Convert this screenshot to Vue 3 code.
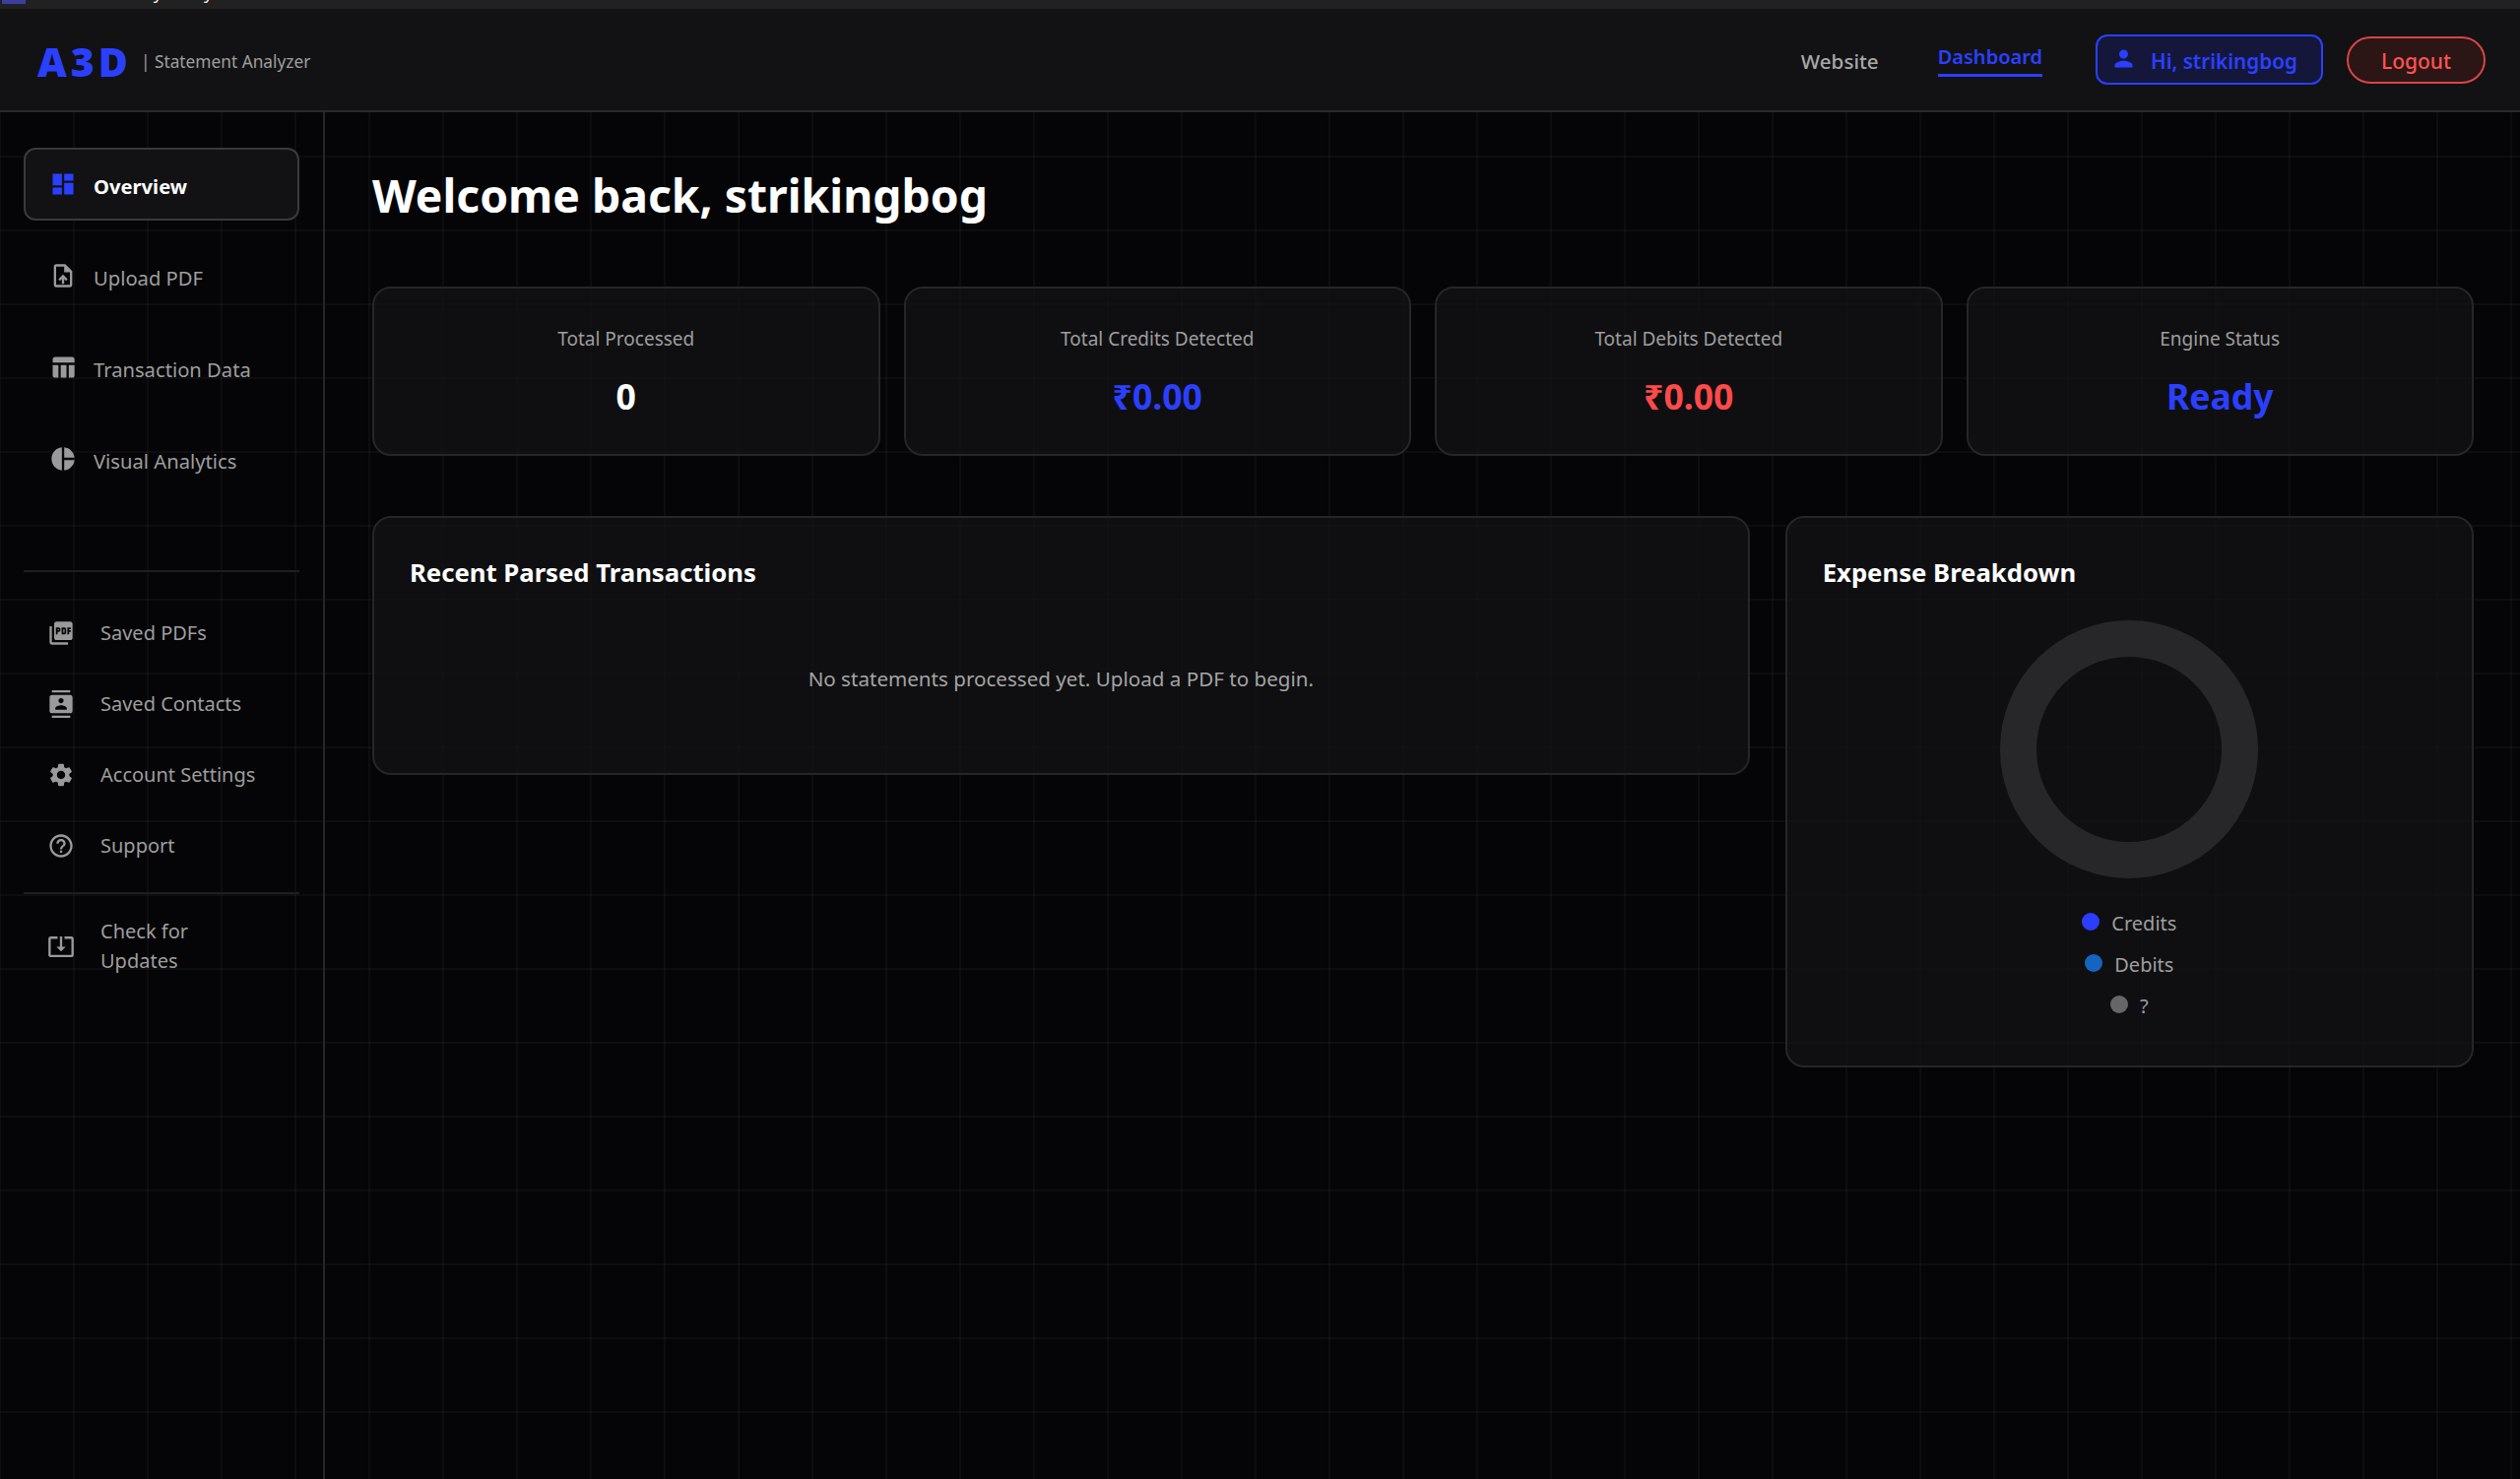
<template>
  <div class="page">
    <div class="topstrip">
      <span class="strip-icon"></span>
      <span class="strip-title">my Analysis</span>
    </div>

    <header class="header">
      <div class="brand">
        <span class="logo">A3D</span>
        <span class="tagline">| Statement Analyzer</span>
      </div>
      <nav class="topnav">
        <a class="toplink">Website</a>
        <a class="toplink active">Dashboard</a>
        <div class="user-box">
          <svg viewBox="0 0 24 24" class="user-icon"><path :d="icons.person" /></svg>
          <span>Hi, strikingbog</span>
        </div>
        <button class="logout">Logout</button>
      </nav>
    </header>

    <div class="body">
      <aside class="sidebar">
        <div class="primary">
          <div v-for="item in primaryNav" :key="item.label" class="nav-item" :class="{ current: item.current }">
            <svg viewBox="0 0 24 24" class="nav-icon"><path :d="item.icon" /></svg>
            <span>{{ item.label }}</span>
          </div>
        </div>
        <div class="divider first"></div>
        <div class="secondary">
          <div v-for="item in secondaryNav" :key="item.label" class="sub-item">
            <svg viewBox="0 0 24 24" class="sub-icon"><path :d="item.icon" /></svg>
            <span>{{ item.label }}</span>
          </div>
        </div>
        <div class="divider"></div>
        <div class="sub-item update">
          <svg viewBox="0 0 24 24" class="sub-icon"><path :d="icons.update" /></svg>
          <span>Check for<br />Updates</span>
        </div>
      </aside>

      <main class="main">
        <h1 class="welcome">Welcome back, strikingbog</h1>

        <section class="stats">
          <div v-for="stat in stats" :key="stat.label" class="card stat">
            <div class="stat-label">{{ stat.label }}</div>
            <div class="stat-value" :class="stat.tone">{{ stat.value }}</div>
          </div>
        </section>

        <section class="panels">
          <div class="card panel recent">
            <h2 class="panel-title">Recent Parsed Transactions</h2>
            <p class="empty">No statements processed yet. Upload a PDF to begin.</p>
          </div>
          <div class="card panel breakdown">
            <h2 class="panel-title">Expense Breakdown</h2>
            <div class="donut"></div>
            <ul class="legend">
              <li v-for="entry in legend" :key="entry.label">
                <i class="dot" :style="{ background: entry.color }"></i>
                <span>{{ entry.label }}</span>
              </li>
            </ul>
          </div>
        </section>
      </main>
    </div>
  </div>
</template>

<script setup>
const icons = {
  dashboard: 'M3 13h8V3H3v10zm0 8h8v-6H3v6zm10 0h8V11h-8v10zm0-18v6h8V3h-8z',
  upload: 'M14 2H6c-1.1 0-1.99.9-1.99 2L4 20c0 1.1.89 2 1.99 2H18c1.1 0 2-.9 2-2V8l-6-6zm4 18H6V4h7v5h5v11zM8 15.01l1.41 1.41L11 14.84V19h2v-4.16l1.59 1.59L16 15.01 12.01 11 8 15.01z',
  table: 'M10 10.02h5V21h-5zM17 21h3c1.1 0 2-.9 2-2v-9h-5v11zm3-18H5c-1.1 0-2 .9-2 2v3h19V5c0-1.1-.9-2-2-2zM3 19c0 1.1.9 2 2 2h3V10H3v9z',
  pie: 'M11 2v20c-5.07-.5-9-4.79-9-10s3.93-9.5 9-10zm2.03 0v8.99H22c-.47-4.74-4.24-8.52-8.97-8.99zm0 11.01V22c4.74-.47 8.5-4.25 8.97-8.99h-8.97z',
  pdf: 'M20 2H8c-1.1 0-2 .9-2 2v12c0 1.1.9 2 2 2h12c1.1 0 2-.9 2-2V4c0-1.1-.9-2-2-2zm-8.5 7.5c0 .83-.67 1.5-1.5 1.5H9v2H7.5V7H10c.83 0 1.5.67 1.5 1.5v1zm5 2c0 .83-.67 1.5-1.5 1.5h-2.5V7H15c.83 0 1.5.67 1.5 1.5v3zm4-3H19v1h1.5V11H19v2h-1.5V7h3v1.5zM9 9.5h1v-1H9v1zM4 6H2v14c0 1.1.9 2 2 2h14v-2H4V6zm10 5.5h1v-3h-1v3z',
  contacts: 'M20 0H4v2h16V0zM4 24h16v-2H4v2zM20 4H4c-1.1 0-2 .9-2 2v12c0 1.1.9 2 2 2h16c1.1 0 2-.9 2-2V6c0-1.1-.9-2-2-2zm-8 2.75c1.24 0 2.25 1.01 2.25 2.25s-1.01 2.25-2.25 2.25S9.75 10.24 9.75 9 10.76 6.75 12 6.75zM17 17H7v-1.5c0-1.67 3.33-2.5 5-2.5s5 .83 5 2.5V17z',
  settings: 'M19.14 12.94c.04-.3.06-.61.06-.94 0-.32-.02-.64-.07-.94l2.03-1.58c.18-.14.23-.41.12-.61l-1.92-3.32c-.12-.22-.37-.29-.59-.22l-2.39.96c-.5-.38-1.03-.7-1.62-.94l-.36-2.54c-.04-.24-.24-.41-.48-.41h-3.84c-.24 0-.43.17-.47.41l-.36 2.54c-.59.24-1.13.57-1.62.94l-2.39-.96c-.22-.08-.47 0-.59.22L2.74 8.87c-.12.21-.08.47.12.61l2.03 1.58c-.05.3-.09.63-.09.94s.02.64.07.94l-2.03 1.58c-.18.14-.23.41-.12.61l1.92 3.32c.12.22.37.29.59.22l2.39-.96c.5.38 1.03.7 1.62.94l.36 2.54c.05.24.24.41.48.41h3.84c.24 0 .44-.17.47-.41l.36-2.54c.59-.24 1.13-.56 1.62-.94l2.39.96c.22.08.47 0 .59-.22l1.92-3.32c.12-.22.07-.47-.12-.61l-2.01-1.58zM12 15.6c-1.98 0-3.6-1.62-3.6-3.6s1.62-3.6 3.6-3.6 3.6 1.62 3.6 3.6-1.62 3.6-3.6 3.6z',
  help: 'M11 18h2v-2h-2v2zm1-16C6.48 2 2 6.48 2 12s4.48 10 10 10 10-4.48 10-10S17.52 2 12 2zm0 18c-4.41 0-8-3.59-8-8s3.59-8 8-8 8 3.59 8 8-3.59 8-8 8zm0-14c-2.21 0-4 1.79-4 4h2c0-1.1.9-2 2-2s2 .9 2 2c0 2-3 1.75-3 5h2c0-2.25 3-2.5 3-5 0-2.21-1.79-4-4-4z',
  update: 'M12 16.5l4-4h-3v-9h-2v9H8l4 4zm9-13h-6v1.99h6v14.03H3V5.49h6V3.5H3c-1.1 0-2 .9-2 2v14c0 1.1.9 2 2 2h18c1.1 0 2-.9 2-2v-14c0-1.1-.9-2-2-2z',
  person: 'M12 12c2.21 0 4-1.79 4-4s-1.79-4-4-4-4 1.79-4 4 1.79 4 4 4zm0 2c-2.67 0-8 1.34-8 4v2h16v-2c0-2.66-5.33-4-8-4z'
}

const primaryNav = [
  { label: 'Overview', icon: icons.dashboard, current: true },
  { label: 'Upload PDF', icon: icons.upload },
  { label: 'Transaction Data', icon: icons.table },
  { label: 'Visual Analytics', icon: icons.pie }
]

const secondaryNav = [
  { label: 'Saved PDFs', icon: icons.pdf },
  { label: 'Saved Contacts', icon: icons.contacts },
  { label: 'Account Settings', icon: icons.settings },
  { label: 'Support', icon: icons.help }
]

const stats = [
  { label: 'Total Processed', value: '0', tone: '' },
  { label: 'Total Credits Detected', value: '₹0.00', tone: 'blue' },
  { label: 'Total Debits Detected', value: '₹0.00', tone: 'red' },
  { label: 'Engine Status', value: 'Ready', tone: 'blue' }
]

const legend = [
  { label: 'Credits', color: '#2b3dff' },
  { label: 'Debits', color: '#1565c0' },
  { label: '?', color: '#666668' }
]
</script>

<style scoped>
.page {
  min-height: 1502px;
  display: flex;
  flex-direction: column;
  background-color: #050507;
  background-image:
    linear-gradient(rgba(255, 255, 255, 0.03) 2px, transparent 2px),
    linear-gradient(90deg, rgba(255, 255, 255, 0.03) 2px, transparent 2px);
  background-size: 75px 75px;
  background-position: -1px 8px;
  font-family: "Noto Sans", "Open Sans", sans-serif;
  color: #9e9e9e;
}

.topstrip {
  height: 9px;
  background: #212121;
  overflow: hidden;
  position: relative;
}

.strip-icon {
  position: absolute;
  left: 2px;
  top: 0;
  width: 24px;
  height: 4px;
  background: #3a3f9e;
}

.strip-title {
  position: absolute;
  left: 139px;
  top: -20px;
  font-size: 18px;
  line-height: 24px;
  color: #f0f0f0;
}

.header {
  height: 105px;
  box-sizing: border-box;
  display: flex;
  align-items: center;
  justify-content: space-between;
  padding: 0 35px 0 38px;
  background: #121214;
  border-bottom: 2px solid #2a2a2c;
}

.brand {
  display: flex;
  align-items: center;
  gap: 9px;
  margin-top: 3px;
}

.logo {
  font-weight: 900;
  font-size: 41px;
  letter-spacing: 4px;
  color: #2b40ff;
  line-height: 1;
}

.tagline {
  font-size: 17.3px;
  color: #9e9e9e;
}

.topnav {
  display: flex;
  align-items: center;
}

.toplink {
  font-size: 20.6px;
  font-weight: 500;
  color: #a8a8a8;
  margin-top: 3px;
  margin-right: 60px;
}

.toplink.active {
  color: #2b40ff;
  font-size: 20px;
  font-weight: 600;
  padding-bottom: 4.5px;
  border-bottom: 3px solid #2b40ff;
  margin-right: 54px;
  margin-top: 0.5px;
}

.user-box {
  width: 231px;
  height: 51px;
  box-sizing: border-box;
  display: flex;
  align-items: center;
  gap: 14px;
  padding: 2px 0 0 13px;
  border: 2px solid #2b40ff;
  border-radius: 12px;
  background: #14173a;
  color: #2b40ff;
  font-size: 20.7px;
  font-weight: 600;
}

.user-icon {
  width: 27px;
  height: 27px;
  margin-top: -4px;
  fill: #2b40ff;
}

.logout {
  width: 141px;
  height: 48px;
  margin-left: 24px;
  padding-top: 4px;
  border: 2px solid #d84545;
  border-radius: 24px;
  background: #2b1515;
  color: #ff5252;
  font-family: inherit;
  font-size: 21px;
  font-weight: 500;
}

.body {
  display: flex;
  flex: 1;
}

.sidebar {
  width: 330px;
  box-sizing: border-box;
  padding: 36px 24px 0;
  border-right: 2px solid #262628;
}

.primary {
  display: flex;
  flex-direction: column;
  gap: 19px;
}

.nav-item {
  height: 74px;
  box-sizing: border-box;
  display: flex;
  align-items: center;
  gap: 17px;
  padding-left: 24px;
  border: 2px solid transparent;
  border-radius: 12px;
  font-size: 20.2px;
  color: #9e9e9e;
}

.nav-item span {
  padding-top: 4px;
}

.nav-item.current {
  background: #121214;
  border-color: #3a3a3c;
  color: #fff;
  font-weight: 700;
}

.nav-icon {
  width: 28px;
  height: 28px;
  flex: none;
  fill: #9a9a9a;
}

.current .nav-icon {
  fill: #2b40ff;
}

.divider {
  height: 2px;
  background: #1e1e20;
}

.divider.first {
  margin-top: 76px;
}

.secondary {
  padding: 26px 0 11px;
  display: flex;
  flex-direction: column;
}

.sub-item {
  height: 72px;
  display: flex;
  align-items: center;
  gap: 26px;
  padding-left: 24px;
  font-size: 20px;
  line-height: 30px;
  color: #9e9e9e;
}

.sub-item.update {
  height: 100px;
  margin-top: 3px;
}

.sub-icon {
  width: 28px;
  height: 28px;
  flex: none;
  fill: #9a9a9a;
}

.main {
  flex: 1;
  padding: 0 47px 0 48px;
}

.welcome {
  margin: 0;
  height: 177px;
  box-sizing: border-box;
  padding-bottom: 8px;
  display: flex;
  align-items: center;
  font-size: 46.3px;
  font-weight: 700;
  color: #fff;
}

.card {
  box-sizing: border-box;
  border: 2px solid #262628;
  border-radius: 19px;
  background: rgba(20, 20, 22, 0.72);
}

.stats {
  display: grid;
  grid-template-columns: repeat(4, 1fr);
  gap: 24px;
}

.stat {
  height: 172px;
  text-align: center;
  padding-top: 36px;
}

.stat-label {
  font-size: 19px;
  line-height: 30px;
  color: #9e9e9e;
}

.stat-value {
  margin-top: 18.5px;
  font-size: 35.6px;
  line-height: 48px;
  font-weight: 700;
  color: #fff;
}

.stat-value.blue {
  color: #2b40ff;
}

.stat-value.red {
  color: #ff4a4a;
}

.panels {
  margin-top: 61px;
  display: grid;
  grid-template-columns: 2fr 1fr;
  gap: 36px;
  align-items: start;
}

.panel {
  padding: 37px 36px;
}

.recent {
  height: 263px;
}

.breakdown {
  height: 560px;
}

.panel-title {
  margin: 1px 0 0;
  font-size: 25.7px;
  line-height: 36px;
  font-weight: 700;
  color: #fff;
}

.empty {
  margin: 74px 0 0;
  text-align: center;
  font-size: 20.6px;
  line-height: 30px;
  color: #a4a4a4;
}

.donut {
  width: 262px;
  height: 262px;
  box-sizing: border-box;
  margin: 30px auto 0;
  border: 37.5px solid #272729;
  border-radius: 50%;
}

.legend {
  list-style: none;
  margin: 24px 0 0;
  padding: 0;
  display: flex;
  flex-direction: column;
  align-items: center;
}

.legend li {
  height: 42px;
  display: flex;
  align-items: center;
  gap: 12px;
  font-size: 20px;
  color: #9e9e9e;
}

.dot {
  width: 18px;
  height: 18px;
  border-radius: 50%;
  margin-top: -2px;
}
</style>

<style>
html,
body {
  background: #050507;
}
</style>
